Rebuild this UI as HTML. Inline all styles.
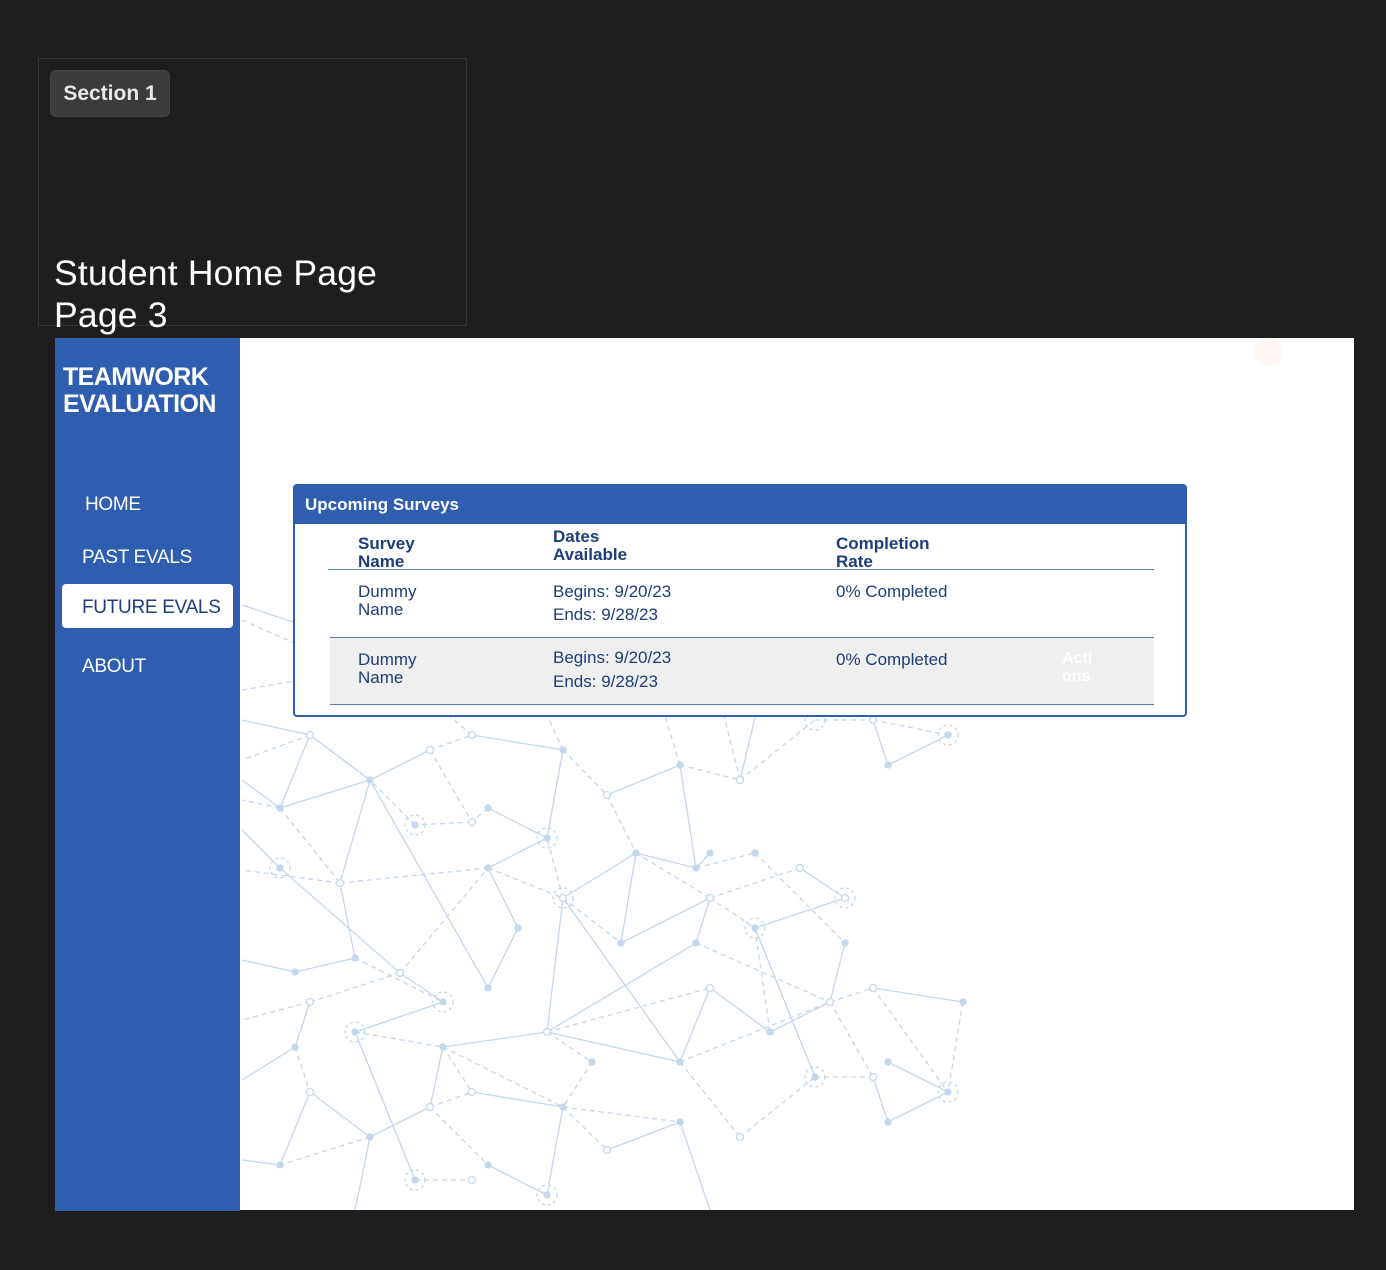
<!DOCTYPE html>
<html><head><meta charset="utf-8"><style>
*{margin:0;padding:0;box-sizing:border-box}
body{width:1386px;height:1270px;background:#1e1e1e;position:relative;overflow:hidden;font-family:"Liberation Sans",sans-serif}
.frame{position:absolute;left:38px;top:58px;width:429px;height:268px;border:1px solid #353535}
.pill{position:absolute;left:50px;top:70px;width:120px;height:47px;background:#3b3b3b;border:1px solid #444;border-radius:6px;color:#e8e8e8;font-size:21px;line-height:45px;text-align:center;font-weight:600}
.title{position:absolute;left:54px;top:252px;color:#fff;font-size:35.5px;line-height:42px;font-weight:300;letter-spacing:0.2px}
.main{position:absolute;left:240px;top:338px;width:1114px;height:872px;background:#fff}
.side{position:absolute;left:55px;top:338px;width:185px;height:873px;background:#2f5db0}
.brand{position:absolute;left:63px;top:364px;color:#fff;font-weight:700;font-size:25px;line-height:27px;letter-spacing:-0.6px}
.nav{position:absolute;color:#fff;font-size:19px;letter-spacing:-0.3px;white-space:nowrap}
.active{position:absolute;left:62px;top:584px;width:171px;height:44px;background:#fff;border-radius:4px;color:#1f3d7a;font-size:19px;letter-spacing:-0.3px;line-height:48px;padding-left:20px;white-space:nowrap}
.card{position:absolute;left:293px;top:484px;width:894px;height:233px;border:2px solid #2f5db0;border-radius:4px;background:#fff}
.hd{position:absolute;left:0;top:0;width:100%;height:38px;background:#2f5db0;color:#fff;font-weight:700;font-size:17px;line-height:38px;padding-left:10px}
.t{position:absolute;color:#1f3d7a;font-size:17px;line-height:18px}
.b{font-weight:700}
</style></head><body>
<div class="frame"></div>
<div class="pill">Section 1</div>
<div class="title">Student Home Page<br>Page 3</div>
<div class="main"></div>
<svg style="position:absolute;left:0;top:0" width="1386" height="1270">
<defs><clipPath id="c"><rect x="241" y="590" width="1000" height="620"/></clipPath></defs>
<g clip-path="url(#c)" stroke="#c5d7ec" stroke-width="1.3" fill="none">
<path d="M310 735L370 780M370 780L430 750M370 780L280 808M310 735L280 808M472 735L563 750M563 750L547 838M488 808L547 838M547 838L488 868M488 868L518 928M518 928L488 988M370 780L488 988M340 883L355 958M280 868L400 973M400 973L443 1002M443 1002L355 1032M607 795L680 765M636 853L621 943M621 943L710 898M636 853L696 868M696 868L710 853M680 765L696 868M563 898L636 853M563 898L547 1032M563 898L680 1062M547 1032L696 943M547 1032L680 1062M547 1032L443 1047M696 943L710 898M740 780L758 705M873 720L888 765M888 765L948 735M800 868L845 898M755 928L845 898M755 928L815 1077M710 988L680 1062M710 988L770 1032M770 1032L830 1002M830 1002L845 943M873 988L963 1002M888 1062L948 1092M948 1092L888 1122M873 1077L888 1122M355 958L295 972M295 1047L242 1080M295 1047L310 1002M355 1032L415 1180M443 1047L430 1107M430 1107L370 1137M370 1137L310 1092M310 1092L280 1165M472 1092L563 1107M563 1107L547 1195M488 1165L547 1195M607 1150L680 1122M680 1122L710 1210M370 1137L355 1210M242 605L293 622M242 720L310 735M242 780L280 808M242 960L295 972M242 1160L280 1165M370 780L340 883M280 868L242 830"/>
<path stroke-dasharray="5 4" d="M310 735L242 760M430 750L472 735M430 750L472 822M472 822L415 825M415 825L370 780M280 808L340 883M340 883L488 868M488 808L472 822M547 838L563 750M563 750L607 795M607 795L636 853M680 765L740 780M740 780L815 720M815 720L873 720M873 720L948 735M710 898L800 868M755 853L845 943M710 898L755 928M696 943L830 1002M755 928L770 1032M830 1002L873 988M873 988L948 1092M963 1002L948 1092M830 1002L873 1077M815 1077L873 1077M547 1032L710 988M547 1032L592 1062M592 1062L563 1107M443 1047L563 1107M400 973L488 868M310 1002L400 973M310 1002L242 1020M355 1032L443 1047M295 1047L310 1092M443 1047L472 1092M430 1107L472 1092M430 1107L488 1165M370 1137L280 1165M415 1180L472 1180M680 1062L740 1137M563 1107L680 1122M563 1107L607 1150M740 1137L815 1077M696 868L755 853M242 620L310 650M242 690L300 680M563 898L621 943M563 898L547 838M488 868L563 898M636 853L710 898M370 780L310 735M280 808L242 800M340 883L242 870M355 958L443 1002M680 1062L830 1002M472 735L430 700M563 750L540 700M680 765L660 700M740 780L720 700"/>
<g fill="#c5d7ec">
<circle cx="370" cy="780" r="3"/><circle cx="280" cy="808" r="3"/><circle cx="563" cy="750" r="3"/><circle cx="547" cy="838" r="3"/><circle cx="488" cy="808" r="3"/><circle cx="488" cy="868" r="3"/><circle cx="518" cy="928" r="3"/><circle cx="488" cy="988" r="3"/><circle cx="355" cy="958" r="3"/><circle cx="295" cy="972" r="3"/><circle cx="443" cy="1002" r="3"/><circle cx="680" cy="765" r="3"/><circle cx="636" cy="853" r="3"/><circle cx="696" cy="868" r="3"/><circle cx="710" cy="853" r="3"/><circle cx="755" cy="853" r="3"/><circle cx="621" cy="943" r="3"/><circle cx="696" cy="943" r="3"/><circle cx="845" cy="943" r="3"/><circle cx="888" cy="765" r="3"/><circle cx="948" cy="735" r="3"/><circle cx="963" cy="1002" r="3"/><circle cx="888" cy="1062" r="3"/><circle cx="948" cy="1092" r="3"/><circle cx="888" cy="1122" r="3"/><circle cx="815" cy="1077" r="3"/><circle cx="680" cy="1062" r="3"/><circle cx="592" cy="1062" r="3"/><circle cx="563" cy="1107" r="3"/><circle cx="443" cy="1047" r="3"/><circle cx="355" cy="1032" r="3"/><circle cx="295" cy="1047" r="3"/><circle cx="280" cy="1165" r="3"/><circle cx="370" cy="1137" r="3"/><circle cx="415" cy="1180" r="3"/><circle cx="488" cy="1165" r="3"/><circle cx="547" cy="1195" r="3"/><circle cx="680" cy="1122" r="3"/><circle cx="280" cy="868" r="3"/><circle cx="415" cy="825" r="3"/><circle cx="755" cy="928" r="3"/><circle cx="770" cy="1032" r="3"/>
</g>
<g fill="#fff">
<circle cx="310" cy="735" r="3.5"/><circle cx="430" cy="750" r="3.5"/><circle cx="472" cy="735" r="3.5"/><circle cx="472" cy="822" r="3.5"/><circle cx="607" cy="795" r="3.5"/><circle cx="740" cy="780" r="3.5"/><circle cx="873" cy="720" r="3.5"/><circle cx="340" cy="883" r="3.5"/><circle cx="563" cy="898" r="3.5"/><circle cx="710" cy="898" r="3.5"/><circle cx="800" cy="868" r="3.5"/><circle cx="845" cy="898" r="3.5"/><circle cx="400" cy="973" r="3.5"/><circle cx="310" cy="1002" r="3.5"/><circle cx="547" cy="1032" r="3.5"/><circle cx="710" cy="988" r="3.5"/><circle cx="830" cy="1002" r="3.5"/><circle cx="873" cy="988" r="3.5"/><circle cx="873" cy="1077" r="3.5"/><circle cx="310" cy="1092" r="3.5"/><circle cx="430" cy="1107" r="3.5"/><circle cx="472" cy="1092" r="3.5"/><circle cx="607" cy="1150" r="3.5"/><circle cx="740" cy="1137" r="3.5"/><circle cx="472" cy="1180" r="3.5"/>
</g>
<g stroke-dasharray="3 3"><circle cx="415" cy="825" r="10"/><circle cx="547" cy="838" r="10"/><circle cx="280" cy="868" r="10"/><circle cx="563" cy="898" r="10"/><circle cx="755" cy="928" r="10"/><circle cx="845" cy="898" r="10"/><circle cx="443" cy="1002" r="10"/><circle cx="355" cy="1032" r="10"/><circle cx="815" cy="1077" r="10"/><circle cx="948" cy="1092" r="10"/><circle cx="948" cy="735" r="10"/><circle cx="815" cy="720" r="10"/><circle cx="415" cy="1180" r="10"/><circle cx="547" cy="1195" r="10"/></g>
</g>
<circle cx="1268" cy="352" r="14" fill="#fff8f4"/>
</svg>
<div class="side"></div>
<div class="brand">TEAMWORK<br>EVALUATION</div>
<div class="nav" style="left:85px;top:494px">HOME</div>
<div class="nav" style="left:82px;top:547px">PAST EVALS</div>
<div class="active">FUTURE EVALS</div>
<div class="nav" style="left:82px;top:656px">ABOUT</div>
<div class="card">
<div class="hd">Upcoming Surveys</div>
<div style="position:absolute;left:33px;top:83px;width:826px;height:1px;background:#5a7bb8"></div>
<div style="position:absolute;left:35px;top:151px;width:824px;height:68px;background:#efefef;border-top:1px solid #5a7bb8;border-bottom:1px solid #5a7bb8"></div>
<div class="t b" style="left:63px;top:49px">Survey<br>Name</div>
<div class="t b" style="left:258px;top:42px">Dates<br>Available</div>
<div class="t b" style="left:541px;top:49px">Completion<br>Rate</div>
<div class="t" style="left:63px;top:97px">Dummy<br>Name</div>
<div class="t" style="left:258px;top:94px;line-height:23px">Begins: 9/20/23<br>Ends: 9/28/23</div>
<div class="t" style="left:541px;top:97px">0% Completed</div>
<div class="t" style="left:63px;top:165px">Dummy<br>Name</div>
<div class="t" style="left:258px;top:160px;line-height:24px">Begins: 9/20/23<br>Ends: 9/28/23</div>
<div class="t" style="left:541px;top:165px">0% Completed</div>
<div class="t b" style="left:767px;top:164px;color:#fff;font-size:16px">Acti<br>ons</div>
</div>
</body></html>
